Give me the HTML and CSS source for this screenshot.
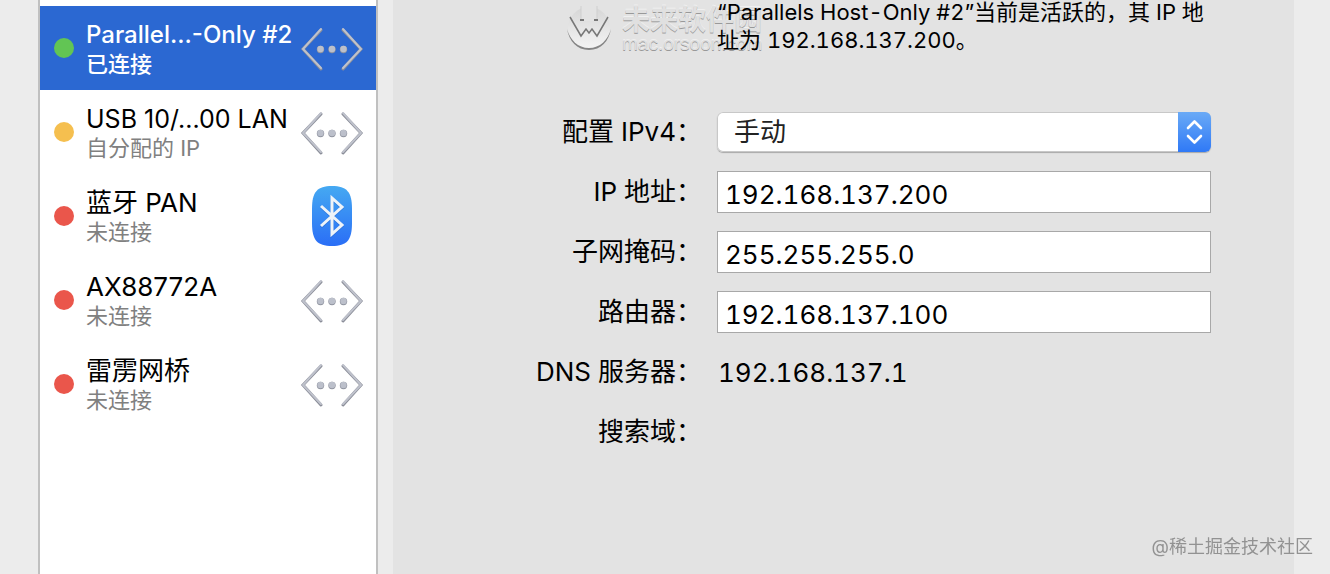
FILE: index.html
```html
<!DOCTYPE html>
<html lang="zh-CN">
<head>
    <meta charset="UTF-8">
    <meta name="viewport" content="width=device-width, initial-scale=1.0">
    <title>网络</title>
    <link rel="stylesheet" href="styles.css">
</head>
<body>

    <svg width="0" height="0" class="defs" aria-hidden="true">
        <defs>
            <linearGradient id="bt" x1="0" y1="0" x2="0" y2="1">
                <stop offset="0" stop-color="#45a9f2"/>
                <stop offset="1" stop-color="#2a6ef6"/>
            </linearGradient>
            <linearGradient id="face" x1="0" y1="0" x2="0" y2="1">
                <stop offset="0" stop-color="#d6d6d6"/>
                <stop offset="1" stop-color="#f4f4f4"/>
            </linearGradient>
            <symbol id="ethernet" viewBox="0 0 64 44">
                <g fill="none" stroke="#8b8e99" stroke-width="3" stroke-linecap="round" stroke-linejoin="miter">
                    <path d="M21 3 3 22 21 42M43 3 61 22 43 42"/>
                </g>
                <g fill="none" stroke="#bfc2cc" stroke-width="2" stroke-linecap="round">
                    <path d="M21 2 3 22 21 41M43 2 61 22 43 41"/>
                </g>
                <g fill="#9094a0">
                    <circle cx="20.500" cy="22.500" r="3.700"/>
                    <circle cx="32" cy="22.500" r="3.700"/>
                    <circle cx="43.500" cy="22.500" r="3.700"/>
                </g>
                <g fill="#bcc0cb">
                    <circle cx="20.500" cy="22" r="3.200"/>
                    <circle cx="32" cy="22" r="3.200"/>
                    <circle cx="43.500" cy="22" r="3.200"/>
                </g>
            </symbol>
        </defs>
    </svg>

    <div class="window">
        <nav class="services">
            <a href="#" class="service selected">
                <span class="dot green"></span>
                <span class="info">
                    <span class="name">Parallel...-Only #2</span>
                    <span class="state">已连接</span>
                </span>
                <svg class="icon"><use href="#ethernet"/></svg>
            </a>
            <a href="#" class="service">
                <span class="dot yellow"></span>
                <span class="info">
                    <span class="name shortened">USB 10/...00 LAN</span>
                    <span class="state">自分配的 IP</span>
                </span>
                <svg class="icon"><use href="#ethernet"/></svg>
            </a>
            <a href="#" class="service">
                <span class="dot red"></span>
                <span class="info">
                    <span class="name">蓝牙 PAN</span>
                    <span class="state">未连接</span>
                </span>
                <svg class="icon bluetooth" viewBox="0 0 64 62">
                    <path d="M32 1C47 1 52 7 52 24V38C52 55 47 61 32 61S12 55 12 38V24C12 7 17 1 32 1Z" fill="url(#bt)"/>
                    <path d="M21 21 42 40 32 49V13L42 22 21 41" fill="none" stroke="#1e5cc4" stroke-opacity=".4" stroke-width="3" transform="translate(0 1)"/>
                    <path d="M21 21 42 40 32 49V13L42 22 21 41" fill="none" stroke="#eef3f8" stroke-width="3"/>
                </svg>
            </a>
            <a href="#" class="service">
                <span class="dot red"></span>
                <span class="info">
                    <span class="name">AX88772A</span>
                    <span class="state">未连接</span>
                </span>
                <svg class="icon"><use href="#ethernet"/></svg>
            </a>
            <a href="#" class="service">
                <span class="dot red"></span>
                <span class="info">
                    <span class="name">雷雳网桥</span>
                    <span class="state">未连接</span>
                </span>
                <svg class="icon"><use href="#ethernet"/></svg>
            </a>
        </nav>

        <main class="panel">
            <div class="site-mark">
                <svg class="site-logo" viewBox="0 0 46 46">
                    <circle cx="23" cy="23" r="21" fill="url(#face)"/>
                    <path d="M15 0V16H31V0Z" fill="#e3e3e3"/>
                    <path d="M1 24C3 36 11 45 23 45S43 36 45 24C42 35 34 43 23 43S4 35 1 24Z" fill="#858585"/>
                    <path d="M15 1V16M31 1V16" fill="none" stroke="#cfcfcf"/>
                    <path d="M14 15H18M28 15H32" stroke="#777" stroke-width="2"/>
                    <path d="M4 12 15 31 20 24 23 28 26 24 31 31 42 12" fill="none" stroke="#777" stroke-width="1.500"/>
                </svg>
                <div class="site-text">
                    <span class="site-name">未来软件园</span>
                    <span class="site-url">mac.orsoon.com</span>
                </div>
            </div>

            <p class="status">“Parallels Host-Only #2”当前是活跃的，其 IP 地址为 192.168.137.200。</p>

            <form class="settings">
                <label for="configure">配置 IPv4：</label>
                <div class="select-box">
                    <select id="configure">
                        <option>手动</option>
                        <option>使用 DHCP</option>
                    </select>
                    <span class="arrows">
                        <svg viewBox="0 0 33 40">
                            <path d="M10 16 16.500 9.500 23 16M10 24 16.500 30.500 23 24" fill="none" stroke="#fff" stroke-width="2.600" stroke-linecap="round" stroke-linejoin="round"/>
                        </svg>
                    </span>
                </div>

                <label for="ip">IP 地址：</label>
                <input type="text" id="ip" value="192.168.137.200">

                <label for="mask">子网掩码：</label>
                <input type="text" id="mask" value="255.255.255.0">

                <label for="router">路由器：</label>
                <input type="text" id="router" value="192.168.137.100">

                <label for="dns">DNS 服务器：</label>
                <output id="dns">192.168.137.1</output>

                <label for="domain">搜索域：</label>
                <output id="domain"></output>
            </form>
        </main>
    </div>

    <div class="community">@稀土掘金技术社区</div>

</body>
</html>
```
FILE: styles.css
```css
* {
    box-sizing: border-box;
}
body {
    margin: 0;
    background-color: #ececec;
    color: #000;
    font-family: Inter, "Noto Sans CJK SC", sans-serif;
    font-size: 26px;
}
.defs {
    position: absolute;
}
.window {
    display: flex;
    gap: 15px;
    min-height: 100vh;
    padding: 0 36px 0 38px;
}
.services {
    flex: 0 0 340px;
    padding-top: 6px;
    background-color: #fff;
    border: solid #c0c0c0;
    border-width: 0 2px;
}
.service {
    display: flex;
    align-items: center;
    height: 84px;
    padding: 0 12px 0 14px;
    color: #000;
    text-decoration: none;
}
.dot {
    flex: none;
    width: 20px;
    height: 20px;
    margin-right: 12px;
    border-radius: 50%;
}
.green {
    background-color: #62c554;
}
.yellow {
    background-color: #f5bf4f;
}
.red {
    background-color: #ea564b;
}
.info {
    flex: 1;
    min-width: 0;
    display: flex;
    flex-direction: column;
    padding-top: 2px;
    white-space: nowrap;
}
.name {
    height: 30px;
    line-height: 30px;
}
.shortened {
    font-size: 25px;
}
.state {
    height: 28px;
    line-height: 28px;
    font-size: 22px;
    color: #808080;
}
.selected {
    background-color: #2b68d2;
    color: #fff;
    font-weight: 500;
}
.selected .name {
    font-size: 24px;
}
.selected .state {
    color: #fff;
}
.icon {
    flex: none;
    width: 64px;
    height: 44px;
    margin-top: 2px;
}
.bluetooth {
    height: 62px;
    margin-top: 0;
}
.panel {
    position: relative;
    flex: 1;
    padding-right: 83px;
    background-color: #e3e3e3;
    font-variant-numeric: tabular-nums;
}
.status {
    position: relative;
    margin: -2px 0 57px 324px;
    font-size: 22px;
    line-height: 28px;
}
.settings {
    display: grid;
    grid-template-columns: 309px 1fr;
    grid-auto-rows: 42px;
    gap: 18px 15px;
    align-items: center;
}
.settings label {
    line-height: 38px;
    text-align: right;
    white-space: nowrap;
}
.settings input {
    width: 100%;
    height: 42px;
    padding: 4px 7px 0;
    border: 1px solid #a8a8a8;
    background-color: #fff;
    color: #000;
    font: inherit;
    font-variant-numeric: tabular-nums;
}
.select-box {
    display: flex;
    height: 40px;
    border-radius: 6px;
    background-color: #fff;
    box-shadow: 0 0 0 1px #c8c8c8 inset, 0 1px 1px #a8a8a8;
    position: relative;
}
.select-box select {
    flex: 1;
    appearance: none;
    padding: 0 50px 2px 17px;
    border: none;
    background: none;
    color: #222;
    font: inherit;
}
.arrows {
    position: absolute;
    right: 0;
    width: 33px;
    height: 40px;
    border-radius: 0 6px 6px 0;
    background: linear-gradient(#6aaaf6, #2f79f6);
    pointer-events: none;
}
.arrows svg {
    display: block;
}
.settings output {
    padding-left: 1px;
}
.site-mark {
    position: absolute;
    top: 5px;
    left: 173px;
    display: flex;
    gap: 10px;
    color: #e0e0e0;
    text-shadow: 0 1px 0 #999, 0 -1px 0 #f0f0f0;
    pointer-events: none;
}
.site-logo {
    width: 46px;
    height: 46px;
}
.site-text {
    display: flex;
    flex-direction: column;
    white-space: nowrap;
}
.site-name {
    font-size: 28px;
    font-weight: bold;
    line-height: 30px;
}
.site-url {
    font-family: "Liberation Sans", sans-serif;
    font-size: 19px;
    line-height: 18px;
}
.community {
    position: fixed;
    right: 17px;
    bottom: 14px;
    color: #929292;
    font-size: 18px;
    line-height: 26px;
}
```
